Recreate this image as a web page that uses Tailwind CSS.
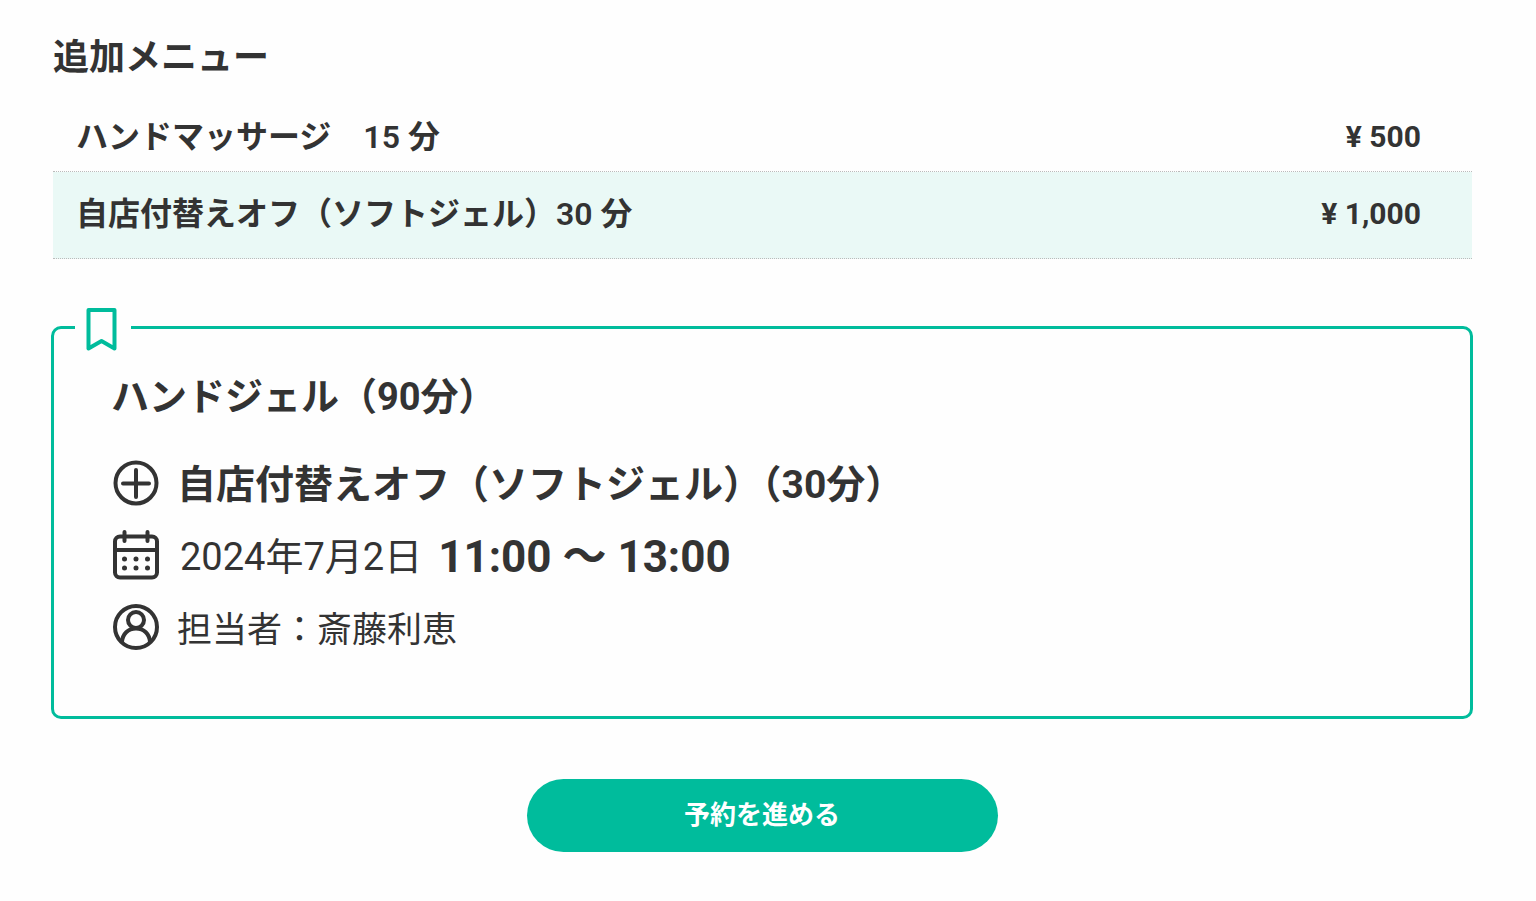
<!DOCTYPE html>
<html lang="ja">
<head>
    <meta charset="UTF-8">
    <meta name="viewport" content="width=device-width, initial-scale=1.0">
    <title>追加メニュー</title>
    <script src="https://cdn.jsdelivr.net/npm/@tailwindcss/browser@4"></script>
</head>
<body class="bg-[#fefefe] text-[#333] font-['Roboto','Noto_Sans_CJK_JP',sans-serif]">
    <main class="pt-8 pl-[51px] pr-[63px]">
        <h1 class="pt-[2px] pl-[2px] text-[36px] leading-12 font-bold">追加メニュー</h1>

        <table class="mt-[18px] ml-[2px] w-[calc(100%-3px)] text-[32px] leading-10 font-semibold">
            <tbody>
                <tr class="border-b border-dotted border-[#bbb]">
                    <th scope="row" class="pt-[17px] pb-[14px] pl-[23px] text-left font-semibold">ハンドマッサージ　15 分</th>
                    <td class="pt-[17px] pb-[14px] pr-[51px] text-right text-[30px] font-bold">¥ 500</td>
                </tr>
                <tr class="border-b border-dotted border-[#bbb] bg-[#eaf9f6]">
                    <th scope="row" class="pt-[22px] pb-6 pl-[23px] text-left font-semibold">自店付替えオフ（ソフトジェル）30 分</th>
                    <td class="pt-[22px] pb-6 pr-[51px] text-right text-[30px] font-bold">¥ 1,000</td>
                </tr>
            </tbody>
        </table>

        <section class="relative mt-[67px] rounded-[10px] border-3 border-[#00bc9c] pt-10 pb-[53px] pl-[57px]">
            <!-- bookmark tab over the border -->
            <div class="absolute -top-[24px] left-[21px] bg-[#fefefe] pr-[14px] pl-[10px]">
                <svg class="h-[46px] w-8" viewBox="0 0 32 46" fill="none" stroke="#00bc9c" stroke-width="4" stroke-linejoin="round">
                    <path d="M3.500 5h26v38.500l-13-7.500-13 7.500z"/>
                </svg>
            </div>

            <h2 class="text-[38px] leading-14 font-bold">ハンドジェル（90分）</h2>

            <ul class="mt-[22px]">
                <li class="flex h-[72px] items-center gap-[18px]">
                    <svg class="size-12 shrink-0" viewBox="0 0 48 48" fill="none" stroke="#333" stroke-width="4" stroke-linecap="round">
                        <circle cx="25" cy="24" r="20.500"/>
                        <path d="M25 11v27M12 24.500h26"/>
                    </svg>
                    <span class="pt-1 text-[39px] font-bold">自店付替えオフ（ソフトジェル）（30分）</span>
                </li>
                <li class="flex h-[72px] items-center gap-[21px]">
                    <svg class="h-[52px] w-12 shrink-0" viewBox="0 0 48 52" fill="none" stroke="#333" stroke-width="4" stroke-linecap="round">
                        <rect x="4" y="7.500" width="42" height="41" rx="5"/>
                        <path d="M4 21h42M13.500 3v9M36.500 3v9"/>
                        <path stroke-width="5" d="M13.500 30h.01M25 30h.01M36.500 30h.01M13.500 39h.01M25 39h.01M36.500 39h.01"/>
                    </svg>
                    <span class="flex items-center gap-4 pt-1">
                        <span class="text-[38px] font-normal">2024年7月2日</span>
                        <span class="text-[44px] font-bold">11:00 〜 13:00</span>
                    </span>
                </li>
                <li class="flex h-[72px] items-center gap-[18px]">
                    <svg class="size-12 shrink-0" viewBox="0 0 48 48" fill="none" stroke="#333" stroke-width="4">
                        <circle cx="25" cy="24" r="21"/>
                        <circle cx="25" cy="17" r="8"/>
                        <path d="M11 39c.5-8 6-13.500 14-13.500s13.500 5.500 14 13.500"/>
                    </svg>
                    <span class="pt-2 text-[35px] font-normal">担当者：斎藤利恵</span>
                </li>
            </ul>
        </section>

        <div class="mt-[60px] flex justify-center">
            <button type="button" class="h-[73px] w-[471px] rounded-full bg-[#00bc9c] text-[26px] font-bold text-white">予約を進める</button>
        </div>
    </main>
</body>
</html>
